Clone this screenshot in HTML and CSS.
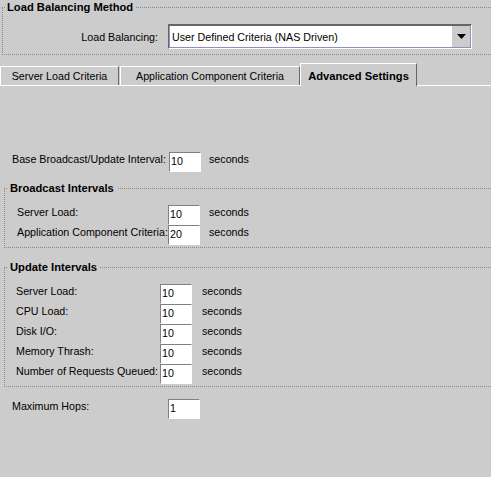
FILE: index.html
```html
<!DOCTYPE html>
<html>
<head>
<meta charset="utf-8">
<title>Advanced Settings</title>
<link rel="stylesheet" href="styles.css">
</head>
<body>
<fieldset class="group method">
  <legend>Load Balancing Method</legend>
  <div class="lb-row">
    <label class="lb-label">Load Balancing:</label>
    <div class="combo">
      <div class="combo-inner">
        <span class="combo-text">User Defined Criteria (NAS Driven)</span>
        <span class="combo-btn"><svg width="9" height="5" viewBox="0 0 9 5"><polygon points="0,0 9,0 4.5,5" fill="#000"/></svg></span>
      </div>
    </div>
  </div>
</fieldset>

<div class="tabs">
  <div class="tab t1">Server Load Criteria</div>
  <div class="tab t2">Application Component Criteria</div>
  <div class="tab t3 active">Advanced Settings</div>
</div>

<div class="panel">
  <div class="row base">
    <span class="lbl">Base Broadcast/Update Interval:</span>
    <input class="field" value="10">
    <span class="unit">seconds</span>
  </div>

  <fieldset class="group sub broadcast">
    <legend>Broadcast Intervals</legend>
    <div class="row">
      <span class="lbl">Server Load:</span>
      <input class="field" value="10">
      <span class="unit">seconds</span>
    </div>
    <div class="row">
      <span class="lbl">Application Component Criteria:</span>
      <input class="field" value="20">
      <span class="unit">seconds</span>
    </div>
  </fieldset>

  <fieldset class="group sub update">
    <legend>Update Intervals</legend>
    <div class="row">
      <span class="lbl">Server Load:</span>
      <input class="field" value="10">
      <span class="unit">seconds</span>
    </div>
    <div class="row">
      <span class="lbl">CPU Load:</span>
      <input class="field" value="10">
      <span class="unit">seconds</span>
    </div>
    <div class="row">
      <span class="lbl">Disk I/O:</span>
      <input class="field" value="10">
      <span class="unit">seconds</span>
    </div>
    <div class="row">
      <span class="lbl">Memory Thrash:</span>
      <input class="field" value="10">
      <span class="unit">seconds</span>
    </div>
    <div class="row">
      <span class="lbl">Number of Requests Queued:</span>
      <input class="field" value="10">
      <span class="unit">seconds</span>
    </div>
  </fieldset>

  <div class="row maxrow">
    <span class="lbl">Maximum Hops:</span>
    <input class="field" value="1">
  </div>
</div>
</body>
</html>
```

FILE: styles.css
```css
html {
  background: #cccccc;
}

body {
  margin: 0;
  background: #cccccc;
  color: #000;
  font-family: "Liberation Sans", Arial, sans-serif;
  font-size: 10.7px;
}

/* group boxes */
.group {
  margin: 0;
  padding: 0;
  border: 1px dotted #8a8a8a;
  border-right: none;
  min-inline-size: 0;
}

.group legend {
  font-weight: bold;
  font-size: 11.2px;
  line-height: 15px;
  padding: 0 3px 0 2px;
}

.method {
  margin-left: 2px;
  padding: 9px 0 5px;
}

.method legend {
  margin-left: 2px;
}

.sub {
  margin-left: 4px;
  padding: 9px 0 2px;
}

.sub legend {
  margin-left: 3px;
}

.broadcast {
  margin-top: 9px;
}

.update {
  margin-top: 12px;
}

/* load balancing row */
.lb-row {
  display: flex;
  align-items: center;
}

.lb-label {
  width: 155px;
  margin-right: 10px;
  text-align: right;
  line-height: 14px;
}

.combo {
  box-sizing: border-box;
  width: 304px;
  height: 25px;
  display: flex;
  border: 1px solid;
  border-color: #666666 #ffffff #ffffff #666666;
}

.combo-inner {
  flex: 1;
  display: flex;
  border: 1px solid;
  border-color: #666666 #8f8fc4 #8f8fc4 #8f8fc4;
}

.combo-text {
  flex: 1;
  display: flex;
  align-items: center;
  padding-left: 2px;
  background: #ffffff;
  line-height: 14px;
  white-space: nowrap;
}

.combo-btn {
  width: 18px;
  display: flex;
  align-items: center;
  justify-content: center;
  background: #cccccc;
}

/* tabs */
.tabs {
  display: flex;
  align-items: flex-end;
  margin-top: 8px;
  height: 22px;
  border-bottom: 1px solid #ffffff;
}

.tab {
  box-sizing: border-box;
  height: 19px;
  padding-top: 2px;
  line-height: 14px;
  text-align: center;
  white-space: nowrap;
  border-top: 1px solid #ffffff;
  border-left: 1px solid #ffffff;
  border-right: 1px solid #666666;
}

.t1 {
  width: 119px;
}

.t2 {
  width: 180px;
  margin-left: 1px;
}

.t3 {
  width: 117px;
}

.tab.active {
  height: 23px;
  padding-top: 5px;
  margin-bottom: -1px;
  background: #cccccc;
  font-weight: bold;
  font-size: 11.2px;
}

/* panel */
.panel {
  padding-top: 66px;
}

.row {
  display: flex;
  align-items: flex-start;
  height: 20px;
}

.lbl {
  flex: none;
  line-height: 14px;
  white-space: nowrap;
}

.field {
  flex: none;
  box-sizing: border-box;
  width: 32px;
  height: 20px;
  margin: 0;
  padding: 0 0 2px 1px;
  border: 1px solid;
  border-color: #808080 #ffffff #ffffff #808080;
  background: #ffffff;
  color: #000;
  font: inherit;
  outline: none;
}

.unit {
  line-height: 14px;
  white-space: nowrap;
}

.base {
  padding-left: 12px;
}

.base .lbl {
  width: 157px;
}

.base .unit {
  margin-left: 8px;
}

.broadcast .row {
  padding-left: 12px;
}

.broadcast .lbl {
  width: 151px;
}

.broadcast .unit {
  margin-left: 9px;
}

.update .row {
  padding-left: 11px;
}

.update .lbl {
  width: 144px;
}

.update .unit {
  margin-left: 10px;
}

.maxrow {
  margin-top: 12px;
  padding-left: 12px;
}

.maxrow .lbl {
  width: 156px;
}
```
